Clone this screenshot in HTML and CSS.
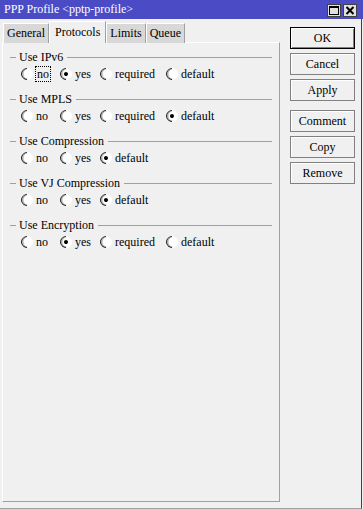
FILE: index.html
```html
<!DOCTYPE html>
<html lang="en">
<head>
    <meta charset="UTF-8">
    <title>PPP Profile &lt;pptp-profile&gt;</title>
    <link rel="stylesheet" href="styles.css">
</head>
<body>

    <div class="window">
        <!-- Titulek okna -->
        <div class="titlebar">
            <span class="title">PPP Profile &lt;pptp-profile&gt;</span>
            <div class="title-btns">
                <span class="tbtn">
                    <svg width="12" height="11" viewBox="0 0 12 11">
                        <rect x="1.5" y="1.5" width="9" height="8" fill="none" stroke="#000" stroke-width="1"/>
                        <rect x="1" y="1" width="10" height="2" fill="#000"/>
                    </svg>
                </span>
                <span class="tbtn">
                    <svg width="12" height="11" viewBox="0 0 12 11">
                        <path d="M2.5 2 L9.5 9 M9.5 2 L2.5 9" stroke="#000" stroke-width="2"/>
                    </svg>
                </span>
            </div>
        </div>

        <div class="content">
            <div class="main">
                <!-- Záložky -->
                <div class="tabs">
                    <div class="tab">General</div>
                    <div class="tab active">Protocols</div>
                    <div class="tab">Limits</div>
                    <div class="tab">Queue</div>
                </div>

                <div class="panel">
                    <div class="group">
                        <div class="legend">Use IPv6</div>
                        <div class="options">
                            <label class="opt"><span class="radio"></span><span class="focus">no</span></label>
                            <label class="opt"><span class="radio on"></span>yes</label>
                            <label class="opt"><span class="radio"></span>required</label>
                            <label class="opt"><span class="radio"></span>default</label>
                        </div>
                    </div>

                    <div class="group">
                        <div class="legend">Use MPLS</div>
                        <div class="options">
                            <label class="opt"><span class="radio"></span>no</label>
                            <label class="opt"><span class="radio"></span>yes</label>
                            <label class="opt"><span class="radio"></span>required</label>
                            <label class="opt"><span class="radio on"></span>default</label>
                        </div>
                    </div>

                    <div class="group">
                        <div class="legend">Use Compression</div>
                        <div class="options">
                            <label class="opt"><span class="radio"></span>no</label>
                            <label class="opt"><span class="radio"></span>yes</label>
                            <label class="opt"><span class="radio on"></span>default</label>
                        </div>
                    </div>

                    <div class="group">
                        <div class="legend">Use VJ Compression</div>
                        <div class="options">
                            <label class="opt"><span class="radio"></span>no</label>
                            <label class="opt"><span class="radio"></span>yes</label>
                            <label class="opt"><span class="radio on"></span>default</label>
                        </div>
                    </div>

                    <div class="group">
                        <div class="legend">Use Encryption</div>
                        <div class="options">
                            <label class="opt"><span class="radio"></span>no</label>
                            <label class="opt"><span class="radio on"></span>yes</label>
                            <label class="opt"><span class="radio"></span>required</label>
                            <label class="opt"><span class="radio"></span>default</label>
                        </div>
                    </div>
                </div>
            </div>

            <!-- Tlačítka vpravo -->
            <div class="actions">
                <button class="btn btn-default">OK</button>
                <button class="btn">Cancel</button>
                <button class="btn">Apply</button>
                <button class="btn btn-sep">Comment</button>
                <button class="btn">Copy</button>
                <button class="btn">Remove</button>
            </div>
        </div>
    </div>

</body>
</html>
```

FILE: styles.css
```css
body {
    font-family: "Liberation Serif", "Times New Roman", serif;
    font-size: 12px;
    background-color: #f0f0f0;
    color: #000;
    margin: 0;
    padding: 0;
}
.window {
    width: 363px;
    height: 509px;
    display: flex;
    flex-direction: column;
}
.titlebar {
    height: 19px;
    background-color: #4b4bc6;
    color: white;
    display: flex;
    align-items: center;
    justify-content: space-between;
    padding: 0 6px 0 4px;
}
.title {
    font-size: 12px;
    line-height: 19px;
}
.title-btns {
    display: flex;
    gap: 2px;
    padding-top: 1px;
}
.tbtn {
    width: 14px;
    height: 13px;
    box-sizing: border-box;
    background-color: #e0e0e0;
    border: 1px solid #404040;
    display: flex;
    align-items: center;
    justify-content: center;
}
.content {
    flex: 1;
    display: flex;
    border-right: 1px solid #404040;
    border-bottom: 1px solid #a0a0a0;
    margin-right: 1px;
}
.main {
    width: 278px;
    padding-left: 2px;
}
.tabs {
    height: 24px;
    display: flex;
    align-items: flex-end;
    padding-left: 1px;
    margin-bottom: -1px;
}
.tab {
    height: 20px;
    line-height: 18px;
    padding: 0 3px;
    box-sizing: border-box;
    background-color: #d8d8d8;
    border-top: 1px solid #fff;
    border-left: 1px solid #fff;
    border-right: 1px solid #a0a0a0;
}
/* Aktivní záložka překrývá horní hranu panelu */
.tab.active {
    height: 22px;
    line-height: 20px;
    padding: 0 5px;
    background-color: #f0f0f0;
    position: relative;
    z-index: 1;
}
.panel {
    height: 460px;
    box-sizing: border-box;
    border: 1px solid;
    border-color: #fff #a0a0a0 #a0a0a0 #fff;
    padding: 7px 7px 0 7px;
}
.group {
    height: 42px;
}
.legend {
    display: flex;
    align-items: center;
    height: 14px;
    line-height: 14px;
}
.legend::before {
    content: "";
    width: 6px;
    border-top: 1px solid #a0a0a0;
    margin-right: 3px;
}
.legend::after {
    content: "";
    flex: 1;
    border-top: 1px solid #a0a0a0;
    margin-left: 4px;
}
.options {
    display: grid;
    grid-template-columns: 39px 40px 66px auto;
    height: 14px;
    margin-top: 3px;
    padding-left: 11px;
}
.opt {
    display: flex;
    align-items: center;
    gap: 3px;
    line-height: 14px;
}
.radio {
    width: 12px;
    height: 12px;
    flex-shrink: 0;
    box-sizing: border-box;
    border-radius: 50%;
    border: 1px solid;
    border-color: #202020 #fff #fff #202020;
    box-shadow: inset 1px 1px #b0b0b0;
    background-color: #fff;
    transform: rotate(-45deg);
    display: flex;
    align-items: center;
    justify-content: center;
}
.radio.on::after {
    content: "";
    width: 4px;
    height: 4px;
    border-radius: 50%;
    background-color: #000;
}
.focus {
    outline: 1px dotted #000;
    padding: 0 1px;
}
.actions {
    width: 65px;
    margin-left: 10px;
    padding-top: 8px;
    display: flex;
    flex-direction: column;
    gap: 4px;
}
.btn {
    height: 22px;
    padding: 0;
    font-family: "Liberation Serif", "Times New Roman", serif;
    font-size: 12px;
    color: #000;
    background-color: #f0f0f0;
    border: 1px solid #808080;
    box-shadow: inset 1px 1px #fff;
    cursor: pointer;
}
.btn-default {
    border-color: #000;
    box-shadow: inset 1px 1px #fff, inset -1px -1px #808080;
}
.btn-sep {
    margin-top: 5px;
}
```
